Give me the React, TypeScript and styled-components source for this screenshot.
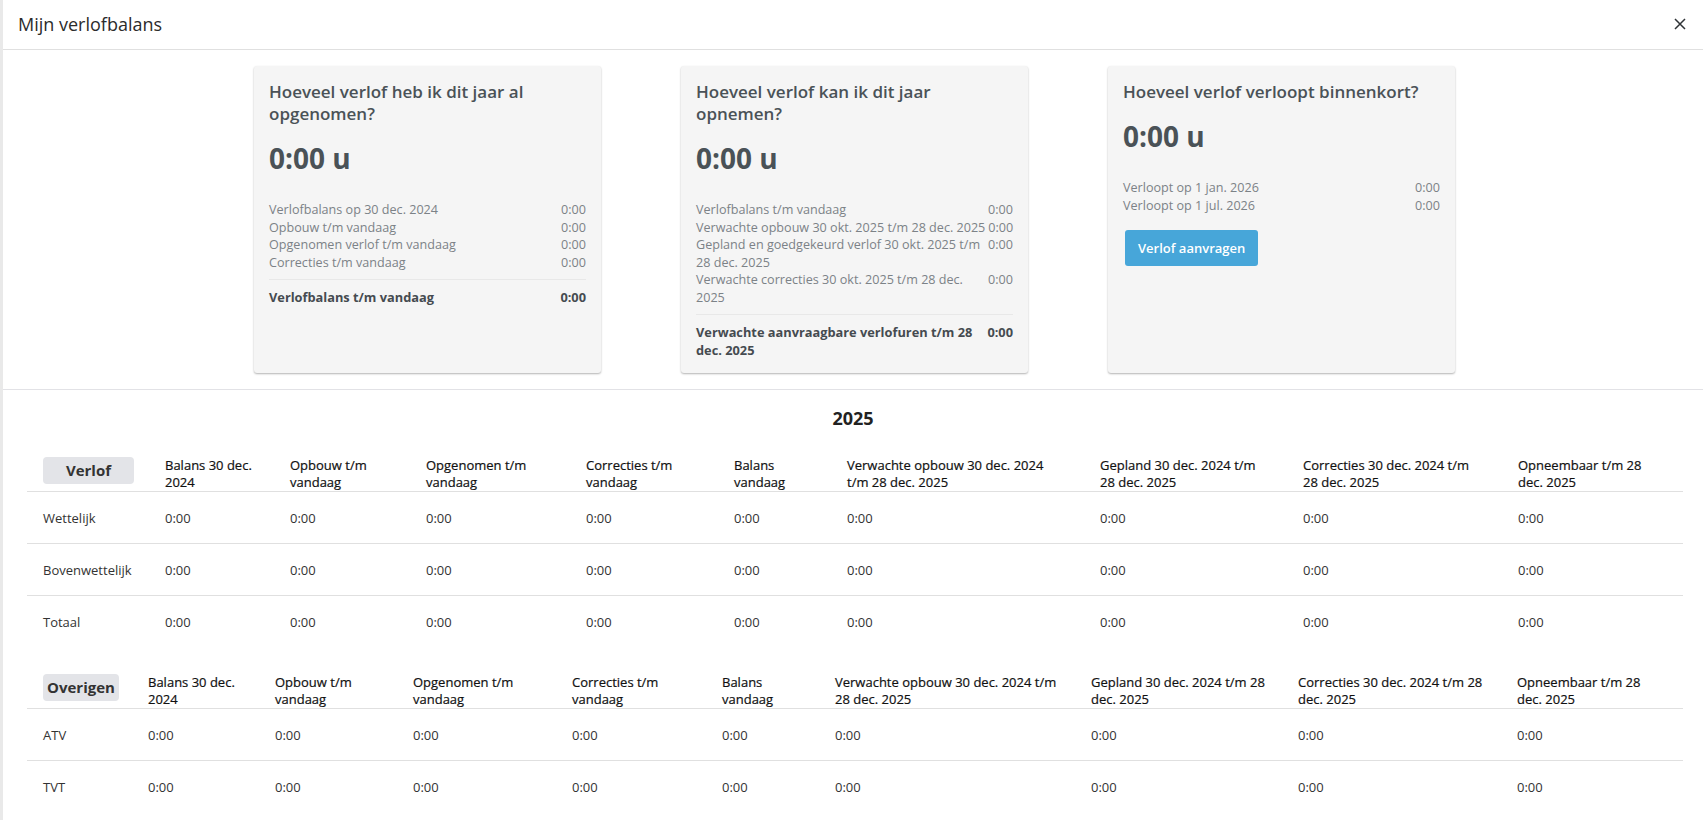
import { FC } from "react";
import styled, { createGlobalStyle } from "styled-components";

// kaarten bovenin
type Line = string[];
type Card = {
   title: Line;
   value: string;
   rows: { label: Line; value: string }[];
   total?: { label: Line; value: string };
   button?: string;
};

const cards: Card[] = [
   {
      title: ["Hoeveel verlof heb ik dit jaar al", "opgenomen?"],
      value: "0:00 u",
      rows: [
         { label: ["Verlofbalans op 30 dec. 2024"], value: "0:00" },
         { label: ["Opbouw t/m vandaag"], value: "0:00" },
         { label: ["Opgenomen verlof t/m vandaag"], value: "0:00" },
         { label: ["Correcties t/m vandaag"], value: "0:00" },
      ],
      total: { label: ["Verlofbalans t/m vandaag"], value: "0:00" },
   },
   {
      title: ["Hoeveel verlof kan ik dit jaar", "opnemen?"],
      value: "0:00 u",
      rows: [
         { label: ["Verlofbalans t/m vandaag"], value: "0:00" },
         { label: ["Verwachte opbouw 30 okt. 2025 t/m 28 dec. 2025"], value: "0:00" },
         { label: ["Gepland en goedgekeurd verlof 30 okt. 2025 t/m", "28 dec. 2025"], value: "0:00" },
         { label: ["Verwachte correcties 30 okt. 2025 t/m 28 dec.", "2025"], value: "0:00" },
      ],
      total: { label: ["Verwachte aanvraagbare verlofuren t/m 28", "dec. 2025"], value: "0:00" },
   },
   {
      title: ["Hoeveel verlof verloopt binnenkort?"],
      value: "0:00 u",
      rows: [
         { label: ["Verloopt op 1 jan. 2026"], value: "0:00" },
         { label: ["Verloopt op 1 jul. 2026"], value: "0:00" },
      ],
      button: "Verlof aanvragen",
   },
];

// tabellen onderin
type Table = { name: string; badgeWidth: number; cols: string; heads: Line[]; rows: string[] };

const tables: Table[] = [
   {
      name: "Verlof",
      badgeWidth: 91,
      cols: "122px 125px 136px 160px 148px 113px 253px 203px 215px 1fr",
      heads: [
         ["Balans 30 dec.", "2024"],
         ["Opbouw t/m", "vandaag"],
         ["Opgenomen t/m", "vandaag"],
         ["Correcties t/m", "vandaag"],
         ["Balans", "vandaag"],
         ["Verwachte opbouw 30 dec. 2024", "t/m 28 dec. 2025"],
         ["Gepland 30 dec. 2024 t/m", "28 dec. 2025"],
         ["Correcties 30 dec. 2024 t/m", "28 dec. 2025"],
         ["Opneembaar t/m 28", "dec. 2025"],
      ],
      rows: ["Wettelijk", "Bovenwettelijk", "Totaal"],
   },
   {
      name: "Overigen",
      badgeWidth: 0,
      cols: "105px 127px 138px 159px 150px 113px 256px 207px 219px 1fr",
      heads: [
         ["Balans 30 dec.", "2024"],
         ["Opbouw t/m", "vandaag"],
         ["Opgenomen t/m", "vandaag"],
         ["Correcties t/m", "vandaag"],
         ["Balans", "vandaag"],
         ["Verwachte opbouw 30 dec. 2024 t/m", "28 dec. 2025"],
         ["Gepland 30 dec. 2024 t/m 28", "dec. 2025"],
         ["Correcties 30 dec. 2024 t/m 28", "dec. 2025"],
         ["Opneembaar t/m 28", "dec. 2025"],
      ],
      rows: ["ATV", "TVT"],
   },
];

const Lines: FC<{ lines: Line }> = ({ lines }) => (
   <>
      {lines.map((l, i) => (
         <span key={i}>
            {i > 0 && <br />}
            {l}
         </span>
      ))}
   </>
);

const App: FC = () => {
   return (
      <>
         <GlobalStyle />
         <Styled.Page>
            <Styled.Header>
               <Styled.Title>Mijn verlofbalans</Styled.Title>
               <Styled.Close aria-label="Sluiten">
                  <svg width="12" height="12" viewBox="0 0 12 12">
                     <path d="M1 1L11 11M11 1L1 11" stroke="#2f3336" strokeWidth="1.5" />
                  </svg>
               </Styled.Close>
            </Styled.Header>

            <Styled.Cards>
               {cards.map((c, i) => (
                  <Styled.Card key={i}>
                     <Styled.CardTitle>
                        <Lines lines={c.title} />
                     </Styled.CardTitle>
                     <Styled.BigValue>{c.value}</Styled.BigValue>
                     <Styled.Details>
                        {c.rows.map((r, j) => (
                           <Styled.DetailRow key={j}>
                              <div>
                                 <Lines lines={r.label} />
                              </div>
                              <span>{r.value}</span>
                           </Styled.DetailRow>
                        ))}
                     </Styled.Details>
                     {c.total && (
                        <>
                           <Styled.Divider />
                           <Styled.DetailRow $bold>
                              <div>
                                 <Lines lines={c.total.label} />
                              </div>
                              <span>{c.total.value}</span>
                           </Styled.DetailRow>
                        </>
                     )}
                     {c.button && <Styled.Button>{c.button}</Styled.Button>}
                  </Styled.Card>
               ))}
            </Styled.Cards>

            <Styled.Year>2025</Styled.Year>

            {tables.map((t) => (
               <Styled.Table key={t.name}>
                  <Styled.HeadRow $cols={t.cols}>
                     <div>
                        <Styled.Badge $minWidth={t.badgeWidth}>{t.name}</Styled.Badge>
                     </div>
                     {t.heads.map((h, i) => (
                        <Styled.HeadCell key={i}>
                           <Lines lines={h} />
                        </Styled.HeadCell>
                     ))}
                  </Styled.HeadRow>
                  {t.rows.map((r) => (
                     <Styled.BodyRow $cols={t.cols} key={r}>
                        <div>{r}</div>
                        {t.heads.map((_, i) => (
                           <div key={i}>0:00</div>
                        ))}
                     </Styled.BodyRow>
                  ))}
               </Styled.Table>
            ))}
         </Styled.Page>
      </>
   );
};

const GlobalStyle = createGlobalStyle`
   * { box-sizing: border-box; }
   html, body { margin: 0; padding: 0; }
   body {
      background: #e9e9e9;
      font-family: "Open Sans", "Liberation Sans", sans-serif;
      color: #333;
      overflow: hidden;
   }
`;

const Styled = {
   Page: styled.div`
      margin-left: 3px;
      min-height: 100vh;
      background: #fff;
   `,
   Header: styled.div`
      height: 50px;
      display: flex;
      align-items: center;
      justify-content: space-between;
      padding: 0 17px 1px 15px;
      border-bottom: 1px solid #e0e0e0;
   `,
   Title: styled.h1`
      margin: 0;
      font-size: 18px;
      font-weight: 400;
      color: #2b2b2b;
   `,
   Close: styled.button`
      border: none;
      background: none;
      padding: 0;
      display: flex;
      cursor: pointer;
   `,
   Cards: styled.div`
      display: flex;
      justify-content: center;
      align-items: stretch;
      gap: 80px;
      padding: 16px 0 16px 3px;
      border-bottom: 1px solid #e2e2e6;
   `,
   Card: styled.div`
      width: 347px;
      padding: 15px 15px 14px;
      background: #f5f5f5;
      border-radius: 3px;
      box-shadow: 0 1px 2px rgba(0, 0, 0, 0.3);
      color: #4a5257;
      white-space: nowrap;
   `,
   CardTitle: styled.div`
      font-size: 17px;
      font-weight: 600;
      line-height: 22px;
   `,
   BigValue: styled.div`
      margin-top: 16px;
      font-size: 28px;
      font-weight: 700;
      line-height: 34px;
   `,
   Details: styled.div`
      margin-top: 26px;
   `,
   DetailRow: styled.div<{ $bold?: boolean }>`
      display: flex;
      justify-content: space-between;
      align-items: flex-start;
      gap: 3px;
      font-size: ${(p) => (p.$bold ? "12.8px" : "12.6px")};
      line-height: 17.5px;
      font-weight: ${(p) => (p.$bold ? 700 : 400)};
      color: ${(p) => (p.$bold ? "#454b50" : "#7c8287")};
      span { flex: none; }
   `,
   Divider: styled.div`
      margin: 8px 0 9px;
      border-top: 1px solid #e8e8e8;
   `,
   Button: styled.button`
      margin: 16px 0 0 2px;
      height: 36px;
      padding: 0 13px;
      border: none;
      border-radius: 3px;
      background: #47a6d9;
      color: #fff;
      font-family: inherit;
      font-size: 13px;
      font-weight: 600;
      cursor: pointer;
   `,
   Year: styled.div`
      margin: 16px 0 27px;
      text-align: center;
      font-size: 18px;
      font-weight: 700;
      line-height: 24px;
      color: #222;
   `,
   Table: styled.div`
      margin: 0 20px 26px 24px;
      font-size: 13px;
      color: #333;
   `,
   HeadRow: styled.div<{ $cols: string }>`
      display: grid;
      grid-template-columns: ${(p) => p.$cols};
      align-items: start;
      padding-left: 16px;
      border-bottom: 1px solid #e0e0e0;
   `,
   HeadCell: styled.div`
      font-weight: 400;
      line-height: 17px;
      white-space: nowrap;
      color: #111;
      -webkit-text-stroke: 0.2px #111;
   `,
   Badge: styled.span<{ $minWidth: number }>`
      display: inline-block;
      min-width: ${(p) => p.$minWidth}px;
      height: 27px;
      padding: 0 4px;
      line-height: 27px;
      text-align: center;
      border-radius: 4px;
      background: #e3e4e8;
      font-size: 15px;
      font-weight: 700;
      color: #333;
   `,
   BodyRow: styled.div<{ $cols: string }>`
      display: grid;
      grid-template-columns: ${(p) => p.$cols};
      align-items: center;
      height: 52px;
      padding-left: 16px;
      border-bottom: 1px solid #e0e0e0;
      &:last-child { border-bottom: none; }
   `,
};

export default App;
